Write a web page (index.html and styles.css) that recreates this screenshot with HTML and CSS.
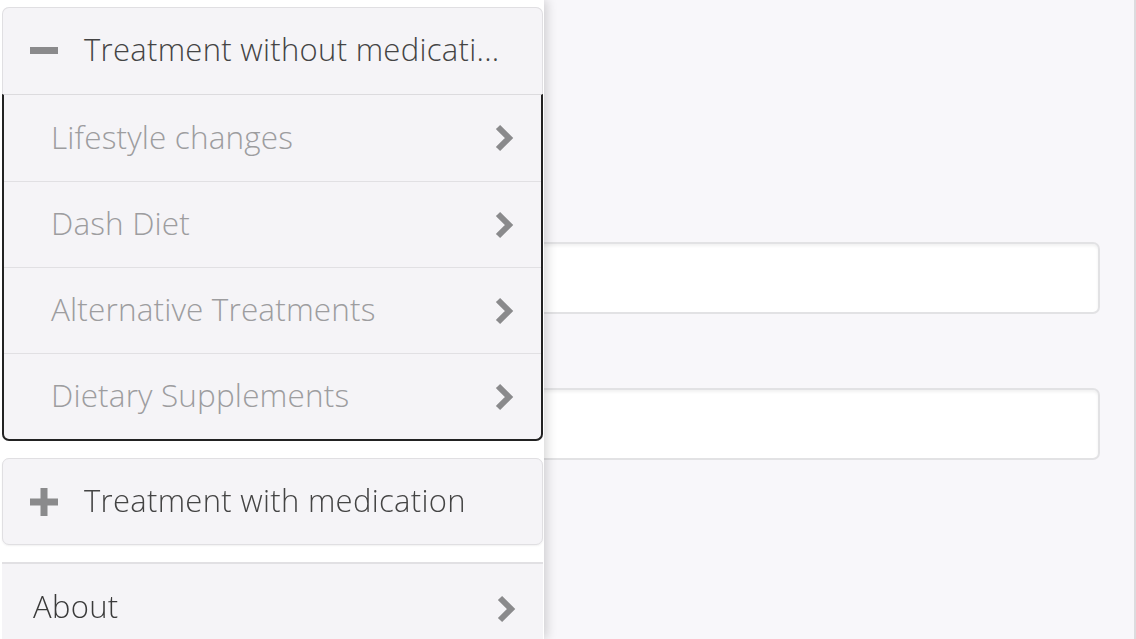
FILE: index.html
```html
<!DOCTYPE html>
<html>
<head>
<meta charset="utf-8">
<link rel="stylesheet" href="styles.css">
</head>
<body>
<main class="content">
  <div class="field"></div>
  <div class="field"></div>
</main>
<nav class="panel">
  <section class="group open">
    <div class="group-head">
      <svg class="sign" width="28" height="28" viewBox="0 0 28 28"><rect x="0" y="10" width="28" height="7" fill="#8a8a8c"/></svg>
      <span class="head-text">Treatment without medicati...</span>
    </div>
    <ul class="items">
      <li class="item"><span>Lifestyle changes</span><svg class="chev" width="20" height="28" viewBox="0 0 20 28"><path d="M4 3 L15 14 L4 25" fill="none" stroke="#8a8a8c" stroke-width="6"/></svg></li>
      <li class="item"><span>Dash Diet</span><svg class="chev" width="20" height="28" viewBox="0 0 20 28"><path d="M4 3 L15 14 L4 25" fill="none" stroke="#8a8a8c" stroke-width="6"/></svg></li>
      <li class="item"><span>Alternative Treatments</span><svg class="chev" width="20" height="28" viewBox="0 0 20 28"><path d="M4 3 L15 14 L4 25" fill="none" stroke="#8a8a8c" stroke-width="6"/></svg></li>
      <li class="item"><span>Dietary Supplements</span><svg class="chev" width="20" height="28" viewBox="0 0 20 28"><path d="M4 3 L15 14 L4 25" fill="none" stroke="#8a8a8c" stroke-width="6"/></svg></li>
    </ul>
  </section>
  <section class="group closed">
    <div class="group-head">
      <svg class="sign" width="28" height="28" viewBox="0 0 28 28"><rect x="0" y="10.5" width="28" height="7" fill="#8a8a8c"/><rect x="10.5" y="0" width="7" height="28" fill="#8a8a8c"/></svg>
      <span class="head-text">Treatment with medication</span>
    </div>
  </section>
  <div class="about"><span>About</span><svg class="chev" width="20" height="28" viewBox="0 0 20 28"><path d="M4 3 L15 14 L4 25" fill="none" stroke="#8a8a8c" stroke-width="6"/></svg></div>
</nav>
</body>
</html>
```
FILE: styles.css
```css
html, body {
  margin: 0;
  padding: 0;
  height: 100%;
  overflow: hidden;
}
body {
  background: #f8f7fa;
  font-family: "Open Sans", "Liberation Sans", sans-serif;
  border-right: 2px solid #dcdcde;
  box-sizing: border-box;
}
.content {
  padding: 242px 34px 0 34px;
  display: flex;
  flex-direction: column;
  gap: 74px;
}
.field {
  height: 68px;
  background: #fff;
  border: 2px solid #e2e2e4;
  border-radius: 7px;
  box-shadow: inset 0 2px 3px rgba(0,0,0,0.06);
}
.panel {
  position: fixed;
  left: 0;
  top: 0;
  width: 544px;
  height: 100%;
  background: #fff;
  box-shadow: 3px 0 10px rgba(0,0,0,0.16);
  padding: 7px 1px 0 2px;
  box-sizing: border-box;
  display: flex;
  flex-direction: column;
}
.group {
  border-radius: 7px;
  background: #f5f4f7;
}
.group-head {
  height: 87px;
  display: flex;
  align-items: center;
  padding-left: 27px;
  gap: 26px;
  border: 1px solid #e0dfe2;
  border-bottom: none;
  border-radius: 7px 7px 0 0;
  box-sizing: border-box;
  color: #444;
  font-size: 31px;
  letter-spacing: 0.3px;
  font-weight: 300;
}
.head-text {
  padding-bottom: 4px;
}
.sign {
  flex: none;
}
.items {
  list-style: none;
  margin: 0;
  padding: 0;
  border: 2px solid #222;
  border-top: 1px solid #dcdbde;
  border-radius: 0 0 7px 7px;
}
.item {
  height: 86px;
  box-sizing: border-box;
  display: flex;
  align-items: center;
  justify-content: space-between;
  padding: 0 27px 0 47px;
  color: #9d9d9f;
  font-size: 31.5px;
  letter-spacing: 0.15px;
  font-weight: 300;
  border-top: 1px solid #e1e0e3;
}
.item:first-child {
  border-top: none;
}
.item span {
  padding-bottom: 4px;
}
.closed {
  margin-top: 17px;
}
.closed .group-head {
  height: 87px;
  border: 1px solid #e0dfe2;
  border-radius: 7px;
  box-shadow: 0 1px 2px rgba(0,0,0,0.06);
}
.about {
  margin-top: 17px;
  flex: 1;
  background: #f5f4f7;
  border-top: 2px solid #e1e0e3;
  display: flex;
  align-items: flex-start;
  justify-content: space-between;
  padding: 21px 27px 0 31px;
  color: #3a3a3a;
  font-size: 31px;
  letter-spacing: 0.3px;
  font-weight: 300;
}
.about .chev {
  margin-top: 10px;
}
```
